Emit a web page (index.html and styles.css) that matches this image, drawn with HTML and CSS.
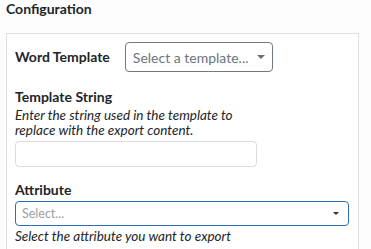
FILE: index.html
```html
<!DOCTYPE html>
<html>
<head>
<meta charset="utf-8">
<link rel="stylesheet" href="styles.css">
</head>
<body>
<h2 class="title">Configuration</h2>
<div class="panel">
  <div class="row">
    <label class="label">Word Template</label>
    <div class="select tpl">
      <span class="placeholder">Select a template...</span>
      <span class="caret"></span>
    </div>
  </div>
  <div class="field">
    <div class="label">Template String</div>
    <div class="help wrap">Enter the string used in the template to replace with the export content.</div>
    <div class="input"></div>
  </div>
  <div class="field attr">
    <div class="label">Attribute</div>
    <div class="select wide">
      <span class="placeholder light">Select...</span>
      <span class="caret small"></span>
    </div>
    <div class="help after">Select the attribute you want to export</div>
  </div>
</div>
</body>
</html>
```
FILE: styles.css
```css
html, body {
  margin: 0;
  padding: 0;
  background: #fdfdfd;
  font-family: Lato, "Open Sans", sans-serif;
  color: #212529;
  overflow: hidden;
}
.title {
  margin: 0;
  padding: 0 6px;
  font-size: 14px;
  font-weight: 700;
  line-height: 18px;
  height: 33px;
  box-sizing: border-box;
}
.panel {
  margin-left: 6px;
  width: 353px;
  height: 240px;
  border: 1px solid #dfdfdf;
  background: #fff;
  padding: 8px 8px;
  box-sizing: border-box;
}
.row {
  display: flex;
  align-items: center;
  gap: 15px;
}
.label {
  font-size: 14px;
  font-weight: 700;
  line-height: 18px;
}
.select {
  display: flex;
  align-items: center;
  justify-content: space-between;
  box-sizing: border-box;
  border: 1px solid #737a81;
  border-radius: 4px;
  background: #fff;
}
.tpl {
  width: 148px;
  height: 30px;
  padding: 0 7px 0 7px;
}
.placeholder {
  font-size: 14px;
  color: #6c757d;
}
.placeholder.light {
  font-size: 12.5px;
  color: #a0a0a0;
}
.caret {
  width: 0;
  height: 0;
  border-left: 4px solid transparent;
  border-right: 4px solid transparent;
  border-top: 4px solid #6a7077;
}
.caret.small {
  border-left-width: 3px;
  border-right-width: 3px;
  border-top: 3px solid #333;
}
.field {
  margin-top: 16px;
}
.help {
  font-size: 13.5px;
  font-style: italic;
  line-height: 14.5px;
  color: #212529;
}
.wrap {
  margin-top: 2px;
  width: 232px;
}
.input {
  margin-top: 4px;
  width: 242px;
  height: 26px;
  box-sizing: border-box;
  border: 1px solid #dcdcdc;
  border-radius: 4px;
}
.attr {
  margin-top: 14px;
}
.wide {
  margin-top: 2px;
  width: 334px;
  height: 25px;
  border-color: #2c6db5;
  padding: 0 9px 0 6px;
}
.after {
  margin-top: 3px;
}
```
